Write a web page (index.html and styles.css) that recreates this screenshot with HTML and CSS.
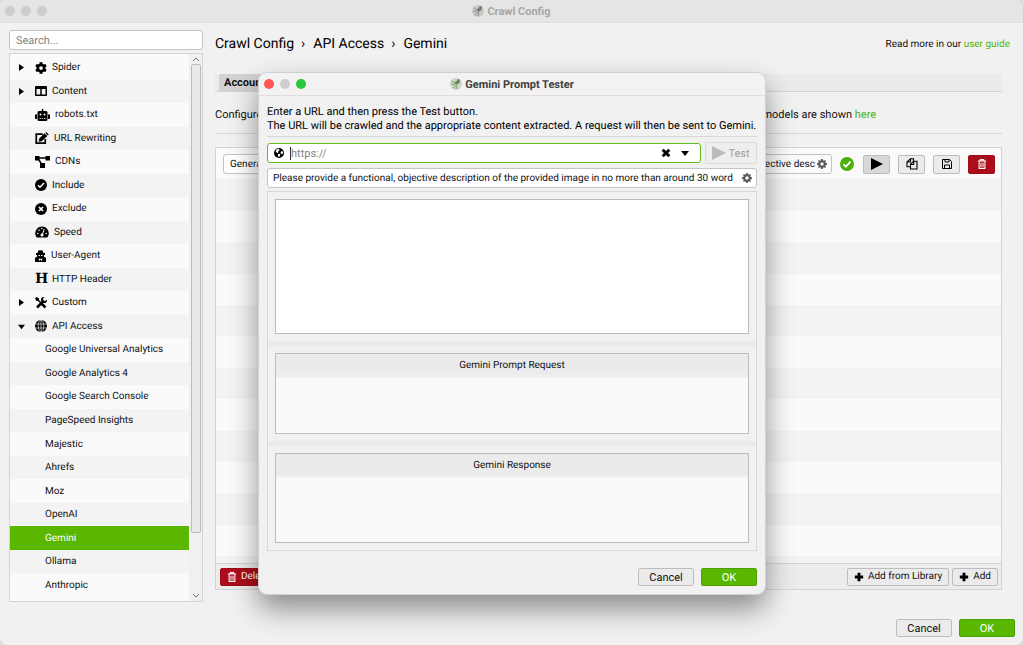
FILE: index.html
```
<!DOCTYPE html>
<html lang="en">
<head>
  <meta charset="UTF-8">
  <title>Crawl Config</title>
  <link rel="stylesheet" href="styles.css">
</head>
<body>
<!-- icon set -->
<svg class="sprite" aria-hidden="true">
  <symbol id="i-logo" viewBox="0 0 24 24">
    <circle cx="12" cy="12" r="12" fill="currentColor" opacity=".25"/>
    <path d="M4 5c2 4 5 6 9 5M3 12c3 2 5 1 8-1M6 20c3-1 5-4 7-8M20 9c-3 0-5 1-7 3M13 13c1 3 1 6-1 9" fill="none" stroke="currentColor" stroke-width="1.500"/>
    <ellipse cx="14" cy="9" rx="4" ry="3" fill="currentColor"/>
    <circle cx="17" cy="5" r="3" fill="currentColor"/>
  </symbol>
  <symbol id="i-cog" viewBox="0 0 512 512">
    <path fill="currentColor" d="M487.4 315.7l-42.6-24.6c4.3-23.2 4.3-47 0-70.2l42.6-24.6c4.9-2.8 7.1-8.6 5.5-14-11.1-35.6-30-67.8-54.7-94.6-3.8-4.1-10-5.1-14.8-2.3L380.8 110c-17.9-15.4-38.5-27.3-60.8-35.1V25.8c0-5.6-3.9-10.5-9.4-11.7-36.7-8.2-74.3-7.8-109.2 0-5.5 1.2-9.4 6.1-9.4 11.7V75c-22.2 7.9-42.8 19.8-60.8 35.1L88.7 85.5c-4.9-2.8-11-1.9-14.8 2.3-24.7 26.7-43.6 58.9-54.7 94.6-1.7 5.4.6 11.2 5.5 14L67.3 221c-4.3 23.2-4.3 47 0 70.2l-42.6 24.6c-4.9 2.8-7.1 8.6-5.5 14 11.1 35.6 30 67.8 54.7 94.6 3.8 4.1 10 5.1 14.8 2.3l42.6-24.6c17.9 15.4 38.5 27.3 60.8 35.1v49.2c0 5.6 3.9 10.5 9.4 11.7 36.7 8.2 74.3 7.8 109.2 0 5.5-1.2 9.4-6.1 9.4-11.7v-49.2c22.2-7.9 42.8-19.8 60.8-35.1l42.6 24.6c4.9 2.8 11 1.9 14.8-2.3 24.7-26.7 43.6-58.9 54.7-94.6 1.5-5.5-.7-11.3-5.6-14.1zM256 336c-44.1 0-80-35.9-80-80s35.9-80 80-80 80 35.9 80 80-35.9 80-80 80z"/>
  </symbol>
  <symbol id="i-gear" viewBox="0 0 20 20">
    <g fill="none" stroke="currentColor"><circle cx="10" cy="10" r="5.500" stroke-width="4"/><path stroke-width="3.500" d="M10 0v4M10 16v4M0 10h4M16 10h4M3 3l2 2M15 15l2 2M17 3l-2 2M5 15l-2 2"/></g>
  </symbol>
  <symbol id="i-columns" viewBox="0 0 24 24">
    <path fill="currentColor" fill-rule="evenodd" d="M2 2h20a2 2 0 0 1 2 2v16a2 2 0 0 1-2 2H2a2 2 0 0 1-2-2V4a2 2 0 0 1 2-2zm1 6v11h7.500V8zm10.500 0v11H21V8z"/>
  </symbol>
  <symbol id="i-robot" viewBox="0 0 30 24">
    <path fill="currentColor" fill-rule="evenodd" d="M13.500 0h3v4H22a3 3 0 0 1 3 3v14a3 3 0 0 1-3 3H8a3 3 0 0 1-3-3V7a3 3 0 0 1 3-3h5.500zM11 9a2 2 0 1 0 0 4 2 2 0 0 0 0-4zm8 0a2 2 0 1 0 0 4 2 2 0 0 0 0-4zM9 18v1.500h3V18zm4.500 0v1.500h3V18zm4.500 0v1.500h3V18zM0 11h4v9H1.500A1.500 1.500 0 0 1 0 18.500zM26 11h4v7.500a1.500 1.500 0 0 1-1.500 1.500H26z"/>
  </symbol>
  <symbol id="i-edit" viewBox="0 0 27 24">
    <path d="M15 4H2v18h18v-8" fill="none" stroke="currentColor" stroke-width="3.500"/>
    <path fill="currentColor" d="M8 13L18.500 2.500l5.500 5.500L13 18.500 7 19.500zM20 1.500l2-1.500 5 5-2 2z"/>
  </symbol>
  <symbol id="i-nodes" viewBox="0 0 30 24">
    <path d="M5 4h20M6 5l9 14" stroke="currentColor" stroke-width="3"/>
    <path fill="currentColor" d="M0 0h9v9H0zM21 0h9v9h-9zM10 14h10v10H10z"/>
  </symbol>
  <symbol id="i-check" viewBox="0 0 24 24">
    <circle cx="12" cy="12" r="12" fill="currentColor"/>
    <path d="M6 12.500l4 4 8-8.500" fill="none" stroke="#fff" stroke-width="3"/>
  </symbol>
  <symbol id="i-cross" viewBox="0 0 24 24">
    <circle cx="12" cy="12" r="12" fill="currentColor"/>
    <path d="M8 8l8 8M16 8l-8 8" stroke="#fff" stroke-width="3.500"/>
  </symbol>
  <symbol id="i-speed" viewBox="0 0 27 24">
    <path fill="currentColor" d="M13.500 1A13.500 13.500 0 0 0 2 21.500c.4.900 1 1.500 2 1.500h19c1 0 1.600-.6 2-1.500A13.500 13.500 0 0 0 13.500 1z"/>
    <path d="M14 18l4-12" stroke="#fff" stroke-width="2"/>
    <g fill="#fff"><circle cx="13.500" cy="18" r="3"/><circle cx="5" cy="15" r="1.500"/><circle cx="7.500" cy="8.500" r="1.500"/><circle cx="13" cy="5" r="1.500"/><circle cx="22" cy="15" r="1.500"/></g>
  </symbol>
  <symbol id="i-agent" viewBox="0 0 22 24">
    <path fill="currentColor" fill-rule="evenodd" d="M5 6l2-5c.5-1 2-1 4 0 2-1 3.500-1 4 0l2 5h3v4h-2v4h1a3 3 0 0 1 3 3v7H0v-7a3 3 0 0 1 3-3h1v-4H2V6zM7 10v2h3v-2zm5 0v2h3v-2zM7 17l2 5 2-3 2 3 2-5-4 1z"/>
  </symbol>
  <symbol id="i-tools" viewBox="0 0 24 24">
    <path d="M4 4l16 16" stroke="currentColor" stroke-width="3"/>
    <path d="M14 14l7 7M4 21L16 9" stroke="currentColor" stroke-width="5"/>
    <path fill="currentColor" d="M0 3l3-3 5 3v3L6 8H3zM24 5l-3 3-4-1-1-4 3-3c-4-1-8 2-7 7l5 5c5 1 8-3 7-7z"/>
  </symbol>
  <symbol id="i-globe" viewBox="0 0 24 24">
    <circle cx="12" cy="12" r="12" fill="currentColor"/>
    <path d="M0 8h24M0 16h24M12 0v24" stroke="#f3f3f3" stroke-width="1.300"/>
    <ellipse cx="12" cy="12" rx="5.500" ry="12" fill="none" stroke="#f3f3f3" stroke-width="1.300"/>
  </symbol>
  <symbol id="i-earth" viewBox="0 0 24 24">
    <circle cx="12" cy="12" r="12" fill="currentColor"/>
    <path fill="#fff" d="M5 5c2-2 4-3 7-3l1 4-3 1 1 3-3 2-4-3zM16 9l4-2 2 4-2 4-4-2zM9 15l5-1 1 3-3 5-2-2z"/>
  </symbol>
  <symbol id="i-play" viewBox="0 0 12 12"><path fill="currentColor" d="M0 0l12 6-12 6z"/></symbol>
  <symbol id="i-arrow" viewBox="0 0 5 7"><path fill="currentColor" d="M0 0l5 3.500L0 7z"/></symbol>
  <symbol id="i-copy" viewBox="0 0 24 24">
    <path d="M15 6V1.500H9L2 8v9.500h7M9 2v6H2.500M22 6.500h-7l-6 6V22h13zM15.500 7v6H9.500" fill="none" stroke="currentColor" stroke-width="2.200"/>
  </symbol>
  <symbol id="i-save" viewBox="0 0 24 24">
    <path d="M3 3h14l4 4v14H3zM8 3v5h8V3M7 21v-7h10v7" fill="none" stroke="currentColor" stroke-width="2"/>
  </symbol>
  <symbol id="i-trash" viewBox="0 0 20 24">
    <path d="M0 5h20M6 4.500V1.500h8v3M3 6v16.500h14V6M7.500 9v10M12.500 9v10" fill="none" stroke="currentColor" stroke-width="2.500"/>
  </symbol>
  <symbol id="i-plus" viewBox="0 0 12 12"><path d="M6 1v10M1 6h10" stroke="currentColor" stroke-width="3.500"/></symbol>
  <symbol id="i-times" viewBox="0 0 12 12"><path d="M2 2l8 8M10 2l-8 8" stroke="currentColor" stroke-width="3.500"/></symbol>
  <symbol id="i-caret" viewBox="0 0 8 6"><path fill="currentColor" d="M0 1h8l-4 5z"/></symbol>
  <symbol id="i-up" viewBox="0 0 8 6"><path d="M1 5l3-3 3 3" fill="none" stroke="currentColor"/></symbol>
  <symbol id="i-down" viewBox="0 0 8 6"><path d="M1 1l3 3 3-3" fill="none" stroke="currentColor"/></symbol>
</svg>

<div class="window">
  <header class="titlebar">
    <div class="lights"><span></span><span></span><span></span></div>
    <h1><svg class="logo"><use href="#i-logo"/></svg>Crawl Config</h1>
  </header>

  <div class="content">
    <aside class="sidebar">
      <input type="text" class="search" placeholder="Search..." aria-label="Search">
      <div class="tree">
        <ul>
          <li><a href="#"><svg class="arrow"><use href="#i-arrow"/></svg><svg class="icon"><use href="#i-cog"/></svg>Spider</a></li>
          <li><a href="#"><svg class="arrow"><use href="#i-arrow"/></svg><svg class="icon"><use href="#i-columns"/></svg>Content</a></li>
          <li><a href="#"><span class="arrow"></span><svg class="icon wider"><use href="#i-robot"/></svg>robots.txt</a></li>
          <li><a href="#"><span class="arrow"></span><svg class="icon wide"><use href="#i-edit"/></svg>URL Rewriting</a></li>
          <li><a href="#"><span class="arrow"></span><svg class="icon wider"><use href="#i-nodes"/></svg>CDNs</a></li>
          <li><a href="#"><span class="arrow"></span><svg class="icon"><use href="#i-check"/></svg>Include</a></li>
          <li><a href="#"><span class="arrow"></span><svg class="icon"><use href="#i-cross"/></svg>Exclude</a></li>
          <li><a href="#"><span class="arrow"></span><svg class="icon wide"><use href="#i-speed"/></svg>Speed</a></li>
          <li><a href="#"><span class="arrow"></span><svg class="icon narrow"><use href="#i-agent"/></svg>User-Agent</a></li>
          <li><a href="#"><span class="arrow"></span><span class="icon letter">H</span>HTTP Header</a></li>
          <li><a href="#"><svg class="arrow"><use href="#i-arrow"/></svg><svg class="icon"><use href="#i-tools"/></svg>Custom</a></li>
          <li><a href="#"><svg class="arrow"><use href="#i-caret"/></svg><svg class="icon"><use href="#i-globe"/></svg>API Access</a></li>
          <li><a href="#" class="child">Google Universal Analytics</a></li>
          <li><a href="#" class="child">Google Analytics 4</a></li>
          <li><a href="#" class="child">Google Search Console</a></li>
          <li><a href="#" class="child">PageSpeed Insights</a></li>
          <li><a href="#" class="child">Majestic</a></li>
          <li><a href="#" class="child">Ahrefs</a></li>
          <li><a href="#" class="child">Moz</a></li>
          <li><a href="#" class="child">OpenAI</a></li>
          <li><a href="#" class="child active">Gemini</a></li>
          <li><a href="#" class="child">Ollama</a></li>
          <li><a href="#" class="child">Anthropic</a></li>
        </ul>
        <div class="scrollbar">
          <svg><use href="#i-up"/></svg>
          <div class="track"><div class="thumb"></div></div>
          <svg><use href="#i-down"/></svg>
        </div>
      </div>
    </aside>

    <main class="main">
      <div class="heading">
        <h2>Crawl Config<span>›</span>API Access<span>›</span>Gemini</h2>
        <p>Read more in our <a href="#">user guide</a></p>
      </div>
      <div class="tabs">
        <button class="tab">Account</button>
      </div>
      <div class="intro">
        <p>Configure</p>
        <p>models are shown <a href="#">here</a></p>
      </div>
      <section class="prompts">
        <div class="rows">
          <div class="row">
            <input type="text" class="field name" value="General" aria-label="Prompt name">
            <div class="field prompt">
              <input type="text" value="objective desc" aria-label="Prompt">
              <svg class="gear"><use href="#i-gear"/></svg>
            </div>
            <svg class="ok"><use href="#i-check"/></svg>
            <button class="btn tool dark" aria-label="Test"><svg><use href="#i-play"/></svg></button>
            <button class="btn tool" aria-label="Copy"><svg><use href="#i-copy"/></svg></button>
            <button class="btn tool" aria-label="Save"><svg><use href="#i-save"/></svg></button>
            <button class="btn tool red" aria-label="Delete"><svg><use href="#i-trash"/></svg></button>
          </div>
          <div class="row"></div>
          <div class="row"></div>
          <div class="row"></div>
          <div class="row"></div>
          <div class="row"></div>
          <div class="row"></div>
          <div class="row"></div>
          <div class="row"></div>
          <div class="row"></div>
          <div class="row"></div>
          <div class="row"></div>
          <div class="row"></div>
        </div>
        <div class="actions">
          <button class="btn red"><svg><use href="#i-trash"/></svg>Delete</button>
          <div class="adds">
            <button class="btn"><svg><use href="#i-plus"/></svg>Add from Library</button>
            <button class="btn"><svg><use href="#i-plus"/></svg>Add</button>
          </div>
        </div>
      </section>
    </main>
  </div>

  <footer class="footer">
    <button class="btn big">Cancel</button>
    <button class="btn big green">OK</button>
  </footer>
</div>

<div class="overlay">
  <div class="modal" role="dialog" aria-labelledby="modal-title">
    <header class="titlebar">
      <div class="lights"><span class="close"></span><span></span><span class="zoom"></span></div>
      <h2 id="modal-title"><svg class="logo"><use href="#i-logo"/></svg>Gemini Prompt Tester</h2>
    </header>
    <div class="modal-body">
      <p class="help">Enter a URL and then press the Test button.<br>The URL will be crawled and the appropriate content extracted. A request will then be sent to Gemini.</p>
      <div class="url-row">
        <div class="url">
          <svg class="earth"><use href="#i-earth"/></svg>
          <span class="cursor"></span>
          <input type="text" placeholder="https://" aria-label="URL">
          <button aria-label="Clear"><svg><use href="#i-times"/></svg></button>
          <button aria-label="History"><svg class="caret"><use href="#i-caret"/></svg></button>
        </div>
        <button class="btn test" disabled><svg><use href="#i-play"/></svg>Test</button>
      </div>
      <div class="field prompt">
        <input type="text" value="Please provide a functional, objective description of the provided image in no more than around 30 word" aria-label="Prompt">
        <svg class="gear"><use href="#i-gear"/></svg>
      </div>
      <div class="frame">
        <div class="pane"><textarea aria-label="Content"></textarea></div>
        <div class="pane request"><section><h3>Gemini Prompt Request</h3></section></div>
        <div class="pane response"><section><h3>Gemini Response</h3></section></div>
      </div>
    </div>
    <footer class="footer">
      <button class="btn big">Cancel</button>
      <button class="btn big green">OK</button>
    </footer>
  </div>
</div>
</body>
</html>
```

FILE: styles.css
```
* {
  box-sizing: border-box;
}

body {
  margin: 0;
  position: relative;
  background: #dcdcdc;
  font-family: Roboto, sans-serif;
  font-size: 10px;
  text-rendering: geometricPrecision;
  color: #111;
}

h1, h2, h3, p, ul {
  margin: 0;
  padding: 0;
}

a {
  color: #4fb40a;
  text-decoration: none;
}

input, textarea, button {
  font: inherit;
  color: inherit;
  text-rendering: inherit;
  margin: 0;
}

input, textarea {
  outline: none;
}

svg {
  display: block;
  flex: none;
}

.sprite {
  display: none;
}

/* windows */
.window {
  min-height: 100vh;
  display: flex;
  flex-direction: column;
  background: #f1f1f1;
  border-right: 1px solid #d0d0d0;
  border-radius: 8px;
  overflow: hidden;
}

.titlebar {
  display: grid;
  grid-template-columns: 1fr auto 1fr;
  align-items: center;
  height: 23px;
  padding: 0 5px;
  background: #e5e5e3;
  border-bottom: 1px solid #dededc;
}

.titlebar h1, .titlebar h2 {
  display: flex;
  align-items: center;
  gap: 3px;
  font-size: 11px;
  font-weight: bold;
  color: #a6a6a6;
}

.logo {
  width: 12px;
  height: 12px;
  color: #777;
}

.lights {
  display: flex;
  gap: 6px;
}

.lights span {
  width: 10px;
  height: 10px;
  border-radius: 50%;
  background: #cdcdcd;
}

.lights .close {
  background: #fc5753;
}

.lights .zoom {
  background: #27c840;
}

.content {
  flex: 1;
  display: flex;
  gap: 12px;
  padding: 7px 9px 0;
}

/* sidebar */
.sidebar {
  width: 194px;
  display: flex;
  flex-direction: column;
  gap: 3px;
}

.search {
  width: 100%;
  height: 20px;
  padding: 0 6px;
  border: 1px solid #c4c4c4;
  border-radius: 3px;
  background: #fff;
  font-size: 11px;
}

::placeholder {
  color: #858585;
}

.tree {
  flex: 1;
  display: flex;
  border: 1px solid #d4d4d4;
  background: #fafafa;
}

.tree ul {
  flex: 1;
  display: flex;
  flex-direction: column;
  padding: 2px 0 4px;
  list-style: none;
}

.tree li {
  flex: 1;
  display: flex;
}

.tree li:nth-child(even) {
  background: #f3f3f3;
}

.tree a {
  flex: 1;
  display: flex;
  align-items: center;
  padding-left: 8px;
  color: #111;
}

.tree .child {
  padding-left: 35px;
}

.tree .active {
  background: #5ab700;
  color: #fff;
}

.arrow {
  width: 7px;
  height: 7px;
  margin-right: 10px;
  color: #000;
}

.icon {
  width: 12px;
  height: 12px;
  margin-right: 5px;
  color: #000;
}

.icon.narrow {
  width: 11px;
}

.icon.wide {
  width: 14px;
}

.icon.wider {
  width: 15px;
}

.icon.letter {
  font: bold 14px/12px "DejaVu Serif", serif;
}

.scrollbar {
  width: 13px;
  display: flex;
  flex-direction: column;
  align-items: center;
  background: #f0f0f0;
  color: #777;
}

.scrollbar svg {
  width: 8px;
  height: 10px;
}

.track {
  flex: 1;
  width: 100%;
  padding: 0 1px 0 2px;
}

.thumb {
  height: 89%;
  border: 1px solid #bcbcbc;
  border-radius: 2px;
  background: #e9e9e9;
}

/* main area */
.main {
  flex: 1;
  min-width: 0;
  display: flex;
  flex-direction: column;
  padding: 0 12px 12px 0;
}

.heading {
  display: flex;
  align-items: center;
  justify-content: space-between;
  height: 28px;
  margin-right: -8px;
}

.heading h2 {
  font-size: 14px;
  font-weight: normal;
  color: #000;
}

.heading h2 span {
  margin: 0 8px 0 7px;
}

.tabs {
  display: flex;
  height: 18px;
  margin-top: 16px;
  padding-left: 4px;
  background: #ebebeb;
  border-bottom: 1px solid #d2d2d2;
}

.tab {
  padding: 0 5px;
  border: 0;
  background: #d2d2d2;
  font-size: 11px;
  font-weight: bold;
}

.intro {
  display: flex;
  justify-content: space-between;
  height: 42px;
  padding-right: 16%;
  border-bottom: 1px solid #d8d8d8;
  font-size: 11px;
  line-height: 46px;
}

.prompts {
  flex: 1;
  display: flex;
  flex-direction: column;
  margin-top: 13px;
  border: 1px solid #d4d4d4;
}

.rows {
  flex: 1;
  display: flex;
  flex-direction: column;
  padding-bottom: 7px;
  background: #f3f3f3;
}

.row {
  flex: 1;
  display: flex;
  align-items: center;
  padding: 1px 6px 0 7px;
}

.row:nth-child(odd) {
  background: #fafafa;
}

.field {
  height: 20px;
  border: 1px solid #c4c4c4;
  border-radius: 3px;
  background: #fff;
}

.field.name {
  width: 180px;
  padding: 0 6px;
}

.field.prompt {
  display: flex;
  align-items: center;
  padding: 0 4px 0 5px;
}

.field.prompt input {
  flex: 1;
  min-width: 0;
  padding: 0;
  border: 0;
  background: none;
}

.gear {
  width: 10px;
  height: 10px;
  color: #555;
}

.row .prompt {
  flex: 1;
  margin: 0 8px;
  background: #fafafa;
}

.row .prompt input {
  margin-right: 2px;
  text-align: right;
}

.ok {
  width: 14px;
  height: 14px;
  margin-right: 1px;
  color: #4caf0a;
}

.btn {
  display: flex;
  align-items: center;
  justify-content: center;
  gap: 4px;
  height: 18px;
  padding: 0 6px;
  border: 1px solid #bdbdbd;
  border-radius: 2px;
  background: #ebebeb;
}

.btn svg {
  width: 10px;
  height: 10px;
  color: #000;
}

.btn.tool {
  width: 27px;
  height: 19px;
  padding: 0;
  margin-left: 8px;
}

.btn.tool svg {
  width: 12px;
  height: 12px;
}

.btn.dark {
  background: #d8d8d8;
}

.btn.red {
  border-color: #a00b18;
  background: #ad0c1b;
  color: #fff;
}

.btn.red svg {
  color: #fff;
}

.btn.tool.red svg {
  height: 10px;
}

.btn.big {
  width: 56px;
  font-size: 11px;
}

.btn.green {
  border-color: #4ca000;
  background: #5ab700;
  color: #fff;
}

.actions {
  display: flex;
  align-items: center;
  justify-content: space-between;
  height: 26px;
  padding: 0 3px 0 4px;
  border-top: 1px solid #d4d4d4;
  background: #ececec;
}

.adds {
  display: flex;
  gap: 3px;
}

.footer {
  display: flex;
  justify-content: flex-end;
  gap: 7px;
  padding: 17px 8px 8px;
}

/* prompt tester */
.overlay {
  position: absolute;
  inset: 0;
  display: flex;
  justify-content: center;
  padding: 72px 0 50px;
}

.modal {
  width: 100%;
  max-width: 508px;
  display: flex;
  flex-direction: column;
  border: 1px solid #d0d0d0;
  border-radius: 9px;
  background: #f1f1f1;
  box-shadow: 0 14px 28px rgba(0, 0, 0, 0.42);
  overflow: hidden;
}

.modal .titlebar {
  background: #f3f1f1;
}

.modal .titlebar h2 {
  color: #404040;
}

.modal .logo {
  color: #5d8a4c;
}

.modal-body {
  flex: 1;
  display: flex;
  flex-direction: column;
  padding: 8px 8px 0;
}

.help {
  height: 33px;
  padding-top: 1px;
  border-bottom: 1px solid #d8d8d8;
  font-size: 11px;
  line-height: 14px;
  white-space: nowrap;
  color: #000;
}

.url-row {
  display: flex;
  gap: 4px;
  margin: 5px 0 4px;
  font-size: 11px;
}

.url {
  flex: 1;
  display: flex;
  align-items: center;
  height: 20px;
  margin-top: 1px;
  padding: 0 6px;
  border: 1px solid #62bd1e;
  border-radius: 3px;
  background: #fff;
}

.url input {
  flex: 1;
  padding: 0;
  border: 0;
  background: none;
}

.url button {
  padding: 0 5px;
  border: 0;
  background: none;
}

.url button svg {
  width: 10px;
  height: 10px;
  color: #000;
}

.url button .caret {
  width: 8px;
  height: 6px;
}

.earth {
  width: 10px;
  height: 10px;
  margin-right: 6px;
  color: #000;
}

.cursor {
  width: 1px;
  height: 13px;
  background: #333;
}

.btn.test {
  width: 52px;
  height: 22px;
  gap: 2px;
  border-color: #dcdcdc;
  background: #eee;
  color: #a0a0a0;
}

.btn.test svg {
  width: 14px;
  height: 14px;
  color: #bbb;
}

.frame {
  flex: 1;
  display: flex;
  flex-direction: column;
  gap: 5px;
  margin-top: 3px;
  border: 1px solid #d8d8d8;
  background: #ebebeb;
}

.pane {
  flex: 134;
  display: flex;
  padding: 7px;
  background: #f1f1f1;
}

.request {
  flex: 81;
}

.response {
  flex: 89;
}

.pane textarea, .pane section {
  flex: 1;
  border: 1px solid #bcbcbc;
  background: #fff;
  resize: none;
}

.pane section {
  background: #fafafa;
}

.pane h3 {
  height: 24px;
  border-bottom: 3px solid #f0f0f0;
  background: #ebebeb;
  line-height: 23px;
  font-size: 10px;
  font-weight: normal;
  text-align: center;
}
```
